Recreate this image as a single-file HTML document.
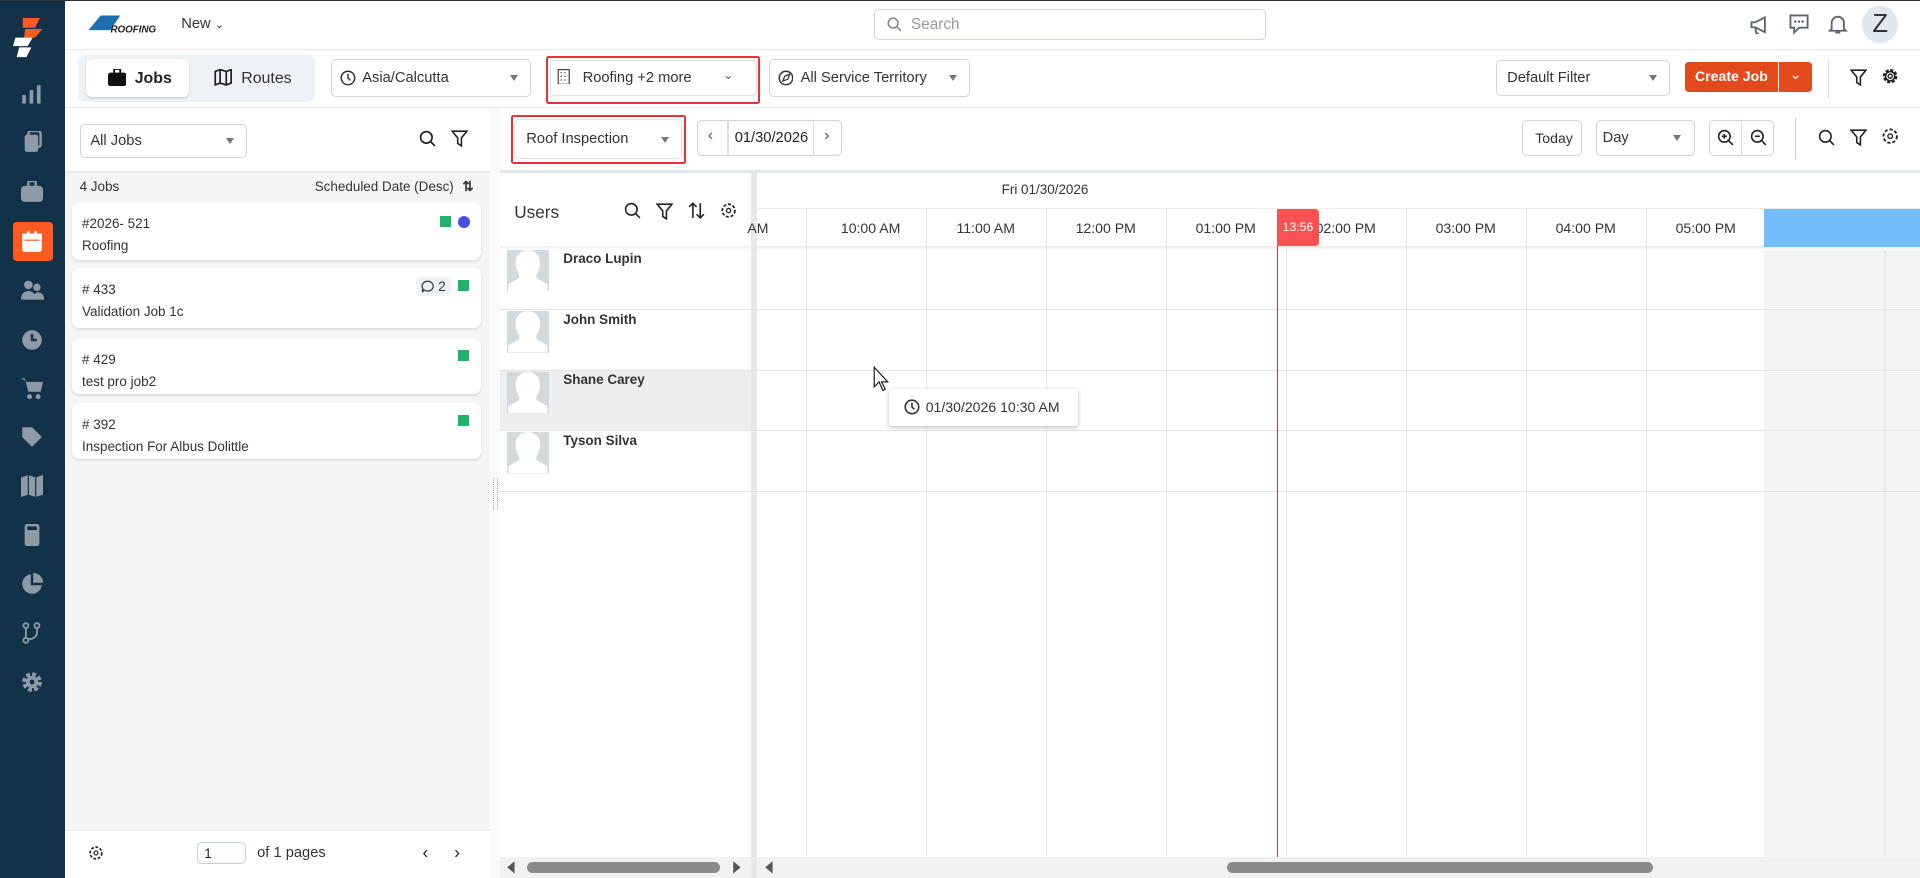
<!DOCTYPE html>
<html><head><meta charset="utf-8"><style>
html,body{margin:0;padding:0;width:1920px;height:878px;overflow:hidden;background:#fff}
#w{zoom:1.22449;width:1568px;height:717px;position:relative;font-family:"Liberation Sans",sans-serif;color:#222;font-size:12px;overflow:hidden}
.a{position:absolute}
.sel{position:absolute;border:1px solid #cfd4da;border-radius:4px;background:#fff;box-sizing:border-box;display:flex;align-items:center;padding-left:8px;font-size:12px;color:#333}
.car{position:absolute;right:10px;top:50%;margin-top:-2px;border-left:4px solid transparent;border-right:4px solid transparent;border-top:5px solid #777}
.card{position:absolute;left:59px;width:334px;background:#fff;border-radius:6px;box-shadow:0 1px 2px rgba(0,0,0,.12);box-sizing:border-box;padding:9px 8px;font-size:11px;color:#333;line-height:18px}
.sq{position:absolute;width:9px;height:9px;background:#1fb36b;top:10px}
.vl{position:absolute;top:171px;bottom:18px;width:1px;background:#e8e8e8}
.hl{position:absolute;height:1px;background:#e3e3e3}
.th{position:absolute;top:180px;font-size:11.5px;color:#333;width:98px;text-align:center}
.av{position:absolute;left:414px;width:34px;height:34px;background:#d5d8dc;overflow:hidden}
.un{position:absolute;left:460px;font-size:11px;font-weight:bold;color:#333}
.sb svg{position:absolute;left:17px}
</style></head><body><div id="w">
<div class="a" style="left:0;top:0;width:1568px;height:1px;background:#333"></div>
<!-- sidebar -->
<div class="a sb" style="left:0;top:1px;width:53px;height:716px;background:#12324a">
<svg style="left:11px;top:14px" width="30" height="32" viewBox="0 0 30 32"><path d="M8 0h14l-4 8H8z" fill="#ff5a1f"/><path d="M10 9h14l-6 7h-9z" fill="#ff5a1f"/><path d="M2 16h14l-4 7H0z" fill="#fff"/><path d="M5 24h10l-4 8H3z" fill="#fff"/></svg>
<svg style="top:68px" width="18" height="16"><rect x="1" y="9" width="3" height="7" fill="#8e9aa5"/><rect x="7" y="5" width="3" height="11" fill="#8e9aa5"/><rect x="13" y="1" width="3" height="15" fill="#8e9aa5"/></svg>
<svg style="top:106px" width="18" height="18"><rect x="3" y="3" width="11" height="14" rx="2" fill="#8e9aa5"/><rect x="6" y="0" width="10" height="13" rx="2" fill="none" stroke="#8e9aa5" stroke-width="2"/></svg>
<svg style="top:147px" width="18" height="17"><rect x="0" y="4" width="18" height="13" rx="3" fill="#8e9aa5"/><rect x="6" y="0" width="6" height="5" rx="1" fill="none" stroke="#8e9aa5" stroke-width="2"/></svg>
<div class="a" style="left:11px;top:180px;width:32px;height:32px;background:#ff5a1f;border-radius:3px"></div>
<svg style="top:188px" width="18" height="17"><rect x="1" y="2" width="16" height="15" rx="2" fill="#fff"/><rect x="1" y="2" width="16" height="4" fill="#fff"/><rect x="3" y="7" width="12" height="1" fill="#ff5a1f"/><rect x="5" y="0" width="2" height="4" fill="#fff"/><rect x="11" y="0" width="2" height="4" fill="#fff"/></svg>
<svg style="top:228px" width="19" height="17"><circle cx="6" cy="4" r="3.5" fill="#8e9aa5"/><circle cx="13" cy="6" r="3" fill="#8e9aa5"/><path d="M0 16c0-5 3-7 6-7s6 2 6 7z M10 16c0-4 2-6 4-6s5 2 5 6z" fill="#8e9aa5"/></svg>
<svg style="top:268px" width="18" height="18"><circle cx="9" cy="9" r="8" fill="#8e9aa5"/><path d="M9 4v5h4" stroke="#12324a" stroke-width="2" fill="none"/></svg>
<svg style="top:307px" width="18" height="18"><path d="M0 1h3l3 11h10l2-8H5" fill="#8e9aa5"/><circle cx="7" cy="16" r="2" fill="#8e9aa5"/><circle cx="14" cy="16" r="2" fill="#8e9aa5"/></svg>
<svg style="top:347px" width="18" height="18"><path d="M1 1h8l8 8-8 8-8-8z" fill="#8e9aa5"/></svg>
<svg style="top:387px" width="18" height="18"><path d="M0 2l6-2 6 2 6-2v16l-6 2-6-2-6 2z" fill="#8e9aa5"/><path d="M6 0v16M12 2v16" stroke="#12324a"/></svg>
<svg style="top:427px" width="18" height="18"><rect x="3" y="0" width="12" height="18" rx="2" fill="#8e9aa5"/><rect x="5" y="2" width="8" height="3" fill="#12324a"/></svg>
<svg style="top:467px" width="18" height="18"><path d="M8 1A8 8 0 1 0 17 10H8z" fill="#8e9aa5"/><path d="M10 0a8 8 0 0 1 8 8h-8z" fill="#8e9aa5"/></svg>
<svg style="top:507px" width="18" height="18"><circle cx="4" cy="3" r="2" fill="none" stroke="#8e9aa5" stroke-width="1.5"/><circle cx="13" cy="3" r="2" fill="none" stroke="#8e9aa5" stroke-width="1.5"/><circle cx="4" cy="15" r="2" fill="none" stroke="#8e9aa5" stroke-width="1.5"/><path d="M4 5v8M13 5v4c0 3-3 5-7 5" stroke="#8e9aa5" stroke-width="1.5" fill="none"/></svg>
<svg style="top:547px" width="18" height="18"><circle cx="9" cy="9" r="6" fill="none" stroke="#8e9aa5" stroke-width="4" stroke-dasharray="3 1.7"/><circle cx="9" cy="9" r="5" fill="#8e9aa5"/><circle cx="9" cy="9" r="2" fill="#12324a"/></svg>
</div>
<!-- top bar -->
<svg class="a" style="left:70px;top:11px" width="60" height="18"><path d="M2 14L12 2h16l-8 12z" fill="#1f6fb0"/><text x="20" y="16" font-size="8" font-style="italic" font-weight="bold" fill="#222" font-family="Liberation Sans">ROOFING</text></svg>
<div class="a" style="left:148px;top:13px;font-size:12px;color:#333">New <span style="font-size:9px">⌄</span></div>
<div class="a" style="left:714px;top:7px;width:320px;height:26px;border:1px solid #cfd4da;border-radius:4px;box-sizing:border-box"></div>
<svg class="a" style="left:724px;top:14px" width="12" height="12"><circle cx="5" cy="5" r="4" fill="none" stroke="#888" stroke-width="1.3"/><path d="M8 8l3.5 3.5" stroke="#888" stroke-width="1.3"/></svg>
<div class="a" style="left:744px;top:13px;font-size:12.5px;color:#999">Search</div>
<svg class="a" style="left:1428px;top:12px" width="16" height="16"><path d="M2 6h3l8-4v12l-8-4H2z M5 10l1 5h2" fill="none" stroke="#5a6570" stroke-width="1.5"/></svg>
<svg class="a" style="left:1460px;top:11px" width="18" height="18"><path d="M2 2h14v10H9l-4 4v-4H2z" fill="none" stroke="#5a6570" stroke-width="1.5"/><circle cx="6" cy="7" r="1" fill="#5a6570"/><circle cx="9" cy="7" r="1" fill="#5a6570"/><circle cx="12" cy="7" r="1" fill="#5a6570"/></svg>
<svg class="a" style="left:1493px;top:11px" width="16" height="18"><path d="M3 13V8a5 5 0 0 1 10 0v5l1.5 1.5h-13z M6 16h4" fill="none" stroke="#5a6570" stroke-width="1.5"/></svg>
<div class="a" style="left:1521px;top:5px;width:29px;height:30px;border-radius:50%;background:#e2e8ef;text-align:center;line-height:30px;font-size:21px;color:#333">Z</div>
<div class="hl" style="left:53px;top:40px;width:1515px;background:#e6e9ed"></div>
<!-- row 2 -->
<div class="a" style="left:64px;top:45px;width:193px;height:38px;background:#eef1f5;border-radius:6px"></div>
<div class="a" style="left:70px;top:48px;width:84px;height:31px;background:#fff;border-radius:5px;box-shadow:0 1px 2px rgba(0,0,0,.15)"></div>
<svg class="a" style="left:88px;top:56px" width="15" height="14"><rect x="0" y="3" width="15" height="11" rx="2" fill="#111"/><rect x="5" y="0" width="5" height="4" fill="none" stroke="#111" stroke-width="1.5"/></svg>
<div class="a" style="left:110px;top:57px;font-size:13px;font-weight:bold;color:#222">Jobs</div>
<svg class="a" style="left:175px;top:56px" width="15" height="14"><path d="M1 2l4-1.5 5 1.5 4-1.5v11l-4 1.5-5-1.5-4 1.5z M5 0.5v11M10 2v11" fill="none" stroke="#222" stroke-width="1.4"/></svg>
<div class="a" style="left:197px;top:57px;font-size:13px;color:#333">Routes</div>
<div class="sel" style="left:270px;top:48px;width:164px;height:31px;padding-left:25px">Asia/Calcutta<span class="car"></span></div>
<svg class="a" style="left:278px;top:57px" width="13" height="13"><circle cx="6.5" cy="6.5" r="5.5" fill="none" stroke="#333" stroke-width="1.2"/><path d="M6.5 3v3.5l2 2" stroke="#333" stroke-width="1.2" fill="none"/></svg>
<div class="a" style="left:446px;top:46px;width:175px;height:39px;border:2px solid #e8323a;box-sizing:border-box;border-radius:2px"></div>
<div class="sel" style="left:449px;top:49px;width:169px;height:29px;border-color:#e0e0e0;padding-left:26px">Roofing +2 more<span class="a" style="right:18px;top:6px;font-size:10px;color:#555">⌄</span></div>
<svg class="a" style="left:455px;top:56px" width="11" height="13"><rect x="1" y="0.5" width="9" height="12" fill="none" stroke="#444"/><path d="M3 3h1M6 3h1M3 6h1M6 6h1M3 9h1M6 9h1" stroke="#444"/></svg>
<div class="sel" style="left:628px;top:48px;width:164px;height:31px;padding-left:25px">All Service Territory<span class="car"></span></div>
<svg class="a" style="left:635px;top:57px" width="13" height="13"><circle cx="6.5" cy="6.5" r="5.5" fill="none" stroke="#333" stroke-width="1.2"/><path d="M4 9l1.5-4 4-1.5-1.5 4z" fill="none" stroke="#333"/></svg>
<div class="sel" style="left:1222px;top:49px;width:142px;height:29px">Default Filter<span class="car"></span></div>
<div class="a" style="left:1376px;top:51px;width:76px;height:24px;background:#e34a1b;border-radius:3px 0 0 3px;color:#fff;font-weight:bold;font-size:11.5px;text-align:center;line-height:24px">Create Job</div>
<div class="a" style="left:1453px;top:51px;width:27px;height:24px;background:#e34a1b;border-radius:0 3px 3px 0;color:#fff;text-align:center;line-height:22px;font-size:12px">⌄</div>
<div class="a" style="left:1493px;top:48px;width:1px;height:32px;background:#ddd"></div>
<svg class="a" style="left:1511px;top:56px" width="14" height="14"><path d="M1 1h12l-4.5 5.5V13l-3-2V6.5z" fill="none" stroke="#222" stroke-width="1.3"/></svg>
<svg class="a" style="left:1536px;top:55px" width="15" height="15" viewBox="0 0 16 16"><circle cx="8" cy="8" r="5" fill="none" stroke="#222" stroke-width="2.6" stroke-dasharray="2.6 1.3"/><circle cx="8" cy="8" r="4" fill="none" stroke="#222" stroke-width="1.3"/><circle cx="8" cy="8" r="1.8" fill="none" stroke="#222" stroke-width="1.2"/></svg>
<div class="hl" style="left:53px;top:87px;width:1515px;background:#e6e9ed"></div>
<!-- left panel -->
<div class="a" style="left:53px;top:88px;width:347px;height:629px;background:#f5f5f5"></div>
<div class="a" style="left:53px;top:88px;width:347px;height:52px;background:#fff"></div>
<div class="sel" style="left:65px;top:101px;width:137px;height:28px">All Jobs<span class="car"></span></div>
<svg class="a" style="left:342px;top:106px" width="14" height="14"><circle cx="6" cy="6" r="4.7" fill="none" stroke="#222" stroke-width="1.4"/><path d="M9.5 9.5l3.5 3.5" stroke="#222" stroke-width="1.4"/></svg>
<svg class="a" style="left:368px;top:106px" width="14" height="14"><path d="M1 1h12l-4.5 5.5V13l-3-2V6.5z" fill="none" stroke="#222" stroke-width="1.3"/></svg>
<div class="hl" style="left:53px;top:140px;width:347px;background:#e6e9ed"></div>
<div class="a" style="left:65px;top:146px;font-size:11px;color:#333">4 Jobs</div>
<div class="a" style="left:257px;top:146px;font-size:11px;color:#333">Scheduled Date (Desc) <b style="margin-left:4px">⇅</b></div>
<div class="card" style="top:165px;height:47px">#2026- 521<br>Roofing<span class="sq" style="left:300px;top:11px"></span><span class="a" style="left:315px;top:11px;width:10px;height:10px;border-radius:50%;background:#4b4fe0"></span></div>
<div class="card" style="top:219px;height:49px"># 433<br>Validation Job 1c<span class="a" style="left:281px;top:7px;width:28px;height:16px;background:#eef1f5;border-radius:4px;font-size:11px;line-height:16px;text-align:right;padding-right:4px;box-sizing:border-box">2</span><svg class="a" style="left:285px;top:10px" width="11" height="11"><path d="M5.5 1a4.5 4 0 1 1-3 7L1 10l.5-3A4.5 4 0 0 1 5.5 1z" fill="none" stroke="#333"/></svg><span class="sq" style="left:315px;top:10px"></span></div>
<div class="card" style="top:276px;height:46px"># 429<br>test pro job2<span class="sq" style="left:315px"></span></div>
<div class="card" style="top:329px;height:46px"># 392<br>Inspection For Albus Dolittle<span class="sq" style="left:315px"></span></div>
<div class="a" style="left:53px;top:678px;width:347px;height:39px;background:#fff;border-top:1px solid #e6e9ed"></div>
<svg class="a" style="left:72px;top:690px" width="13" height="13" viewBox="0 0 16 16"><circle cx="8" cy="8" r="5.5" fill="none" stroke="#222" stroke-width="2.4" stroke-dasharray="2.6 1.6"/><circle cx="8" cy="8" r="4.3" fill="none" stroke="#fff" stroke-width="1.5"/><circle cx="8" cy="8" r="2" fill="none" stroke="#222" stroke-width="1.2"/></svg>
<div class="a" style="left:161px;top:688px;width:40px;height:18px;border:1px solid #c8d0da;border-radius:4px;box-sizing:border-box;font-size:11px;padding:2px 5px;background:#fcfdff">1</div>
<div class="a" style="left:210px;top:690px;font-size:12px;color:#333">of 1 pages</div>
<div class="a" style="left:345px;top:688px;font-size:14px;color:#222">‹</div>
<div class="a" style="left:371px;top:688px;font-size:14px;color:#222">›</div>
<!-- splitter -->
<div class="a" style="left:400px;top:88px;width:8px;height:629px;background:#fafafa"></div>
<div class="a" style="left:403px;top:390px;width:2px;height:26px;border-left:1px dotted #aaa;border-right:1px dotted #aaa"></div>
<!-- right toolbar -->
<div class="a" style="left:417px;top:94px;width:143px;height:40px;border:2px solid #e8323a;box-sizing:border-box;border-radius:2px"></div>
<div class="sel" style="left:420px;top:97px;width:137px;height:33px;border-color:#e0e0e0;padding-left:9px">Roof Inspection<span class="car"></span></div>
<div class="a" style="left:569px;top:98px;width:119px;height:29px;border:1px solid #cfd4da;border-radius:4px;box-sizing:border-box"></div>
<div class="a" style="left:594px;top:98px;width:1px;height:29px;background:#dde"></div>
<div class="a" style="left:664px;top:98px;width:1px;height:29px;background:#dde"></div>
<div class="a" style="left:578px;top:104px;font-size:13px;color:#555">‹</div>
<div class="a" style="left:600px;top:106px;font-size:12px;color:#222">01/30/2026</div>
<div class="a" style="left:673px;top:104px;font-size:13px;color:#555">›</div>
<div class="sel" style="left:1243px;top:98px;width:49px;height:29px;padding-left:10px;font-size:11.5px">Today</div>
<div class="sel" style="left:1303px;top:98px;width:81px;height:29px;padding-left:5px">Day<span class="car"></span></div>
<div class="a" style="left:1396px;top:98px;width:53px;height:29px;border:1px solid #cfd4da;border-radius:4px;box-sizing:border-box"></div>
<div class="a" style="left:1422px;top:98px;width:1px;height:29px;background:#dde"></div>
<svg class="a" style="left:1402px;top:105px" width="14" height="14"><circle cx="6" cy="6" r="4.7" fill="none" stroke="#222" stroke-width="1.3"/><path d="M9.5 9.5l3.5 3.5M4 6h4M6 4v4" stroke="#222" stroke-width="1.3"/></svg>
<svg class="a" style="left:1429px;top:105px" width="14" height="14"><circle cx="6" cy="6" r="4.7" fill="none" stroke="#222" stroke-width="1.3"/><path d="M9.5 9.5l3.5 3.5M4 6h4" stroke="#222" stroke-width="1.3"/></svg>
<div class="a" style="left:1466px;top:96px;width:1px;height:34px;background:#ccc"></div>
<svg class="a" style="left:1485px;top:105px" width="14" height="14"><circle cx="6" cy="6" r="4.7" fill="none" stroke="#222" stroke-width="1.3"/><path d="M9.5 9.5l3.5 3.5" stroke="#222" stroke-width="1.3"/></svg>
<svg class="a" style="left:1511px;top:105px" width="14" height="14"><path d="M1 1h12l-4.5 5.5V13l-3-2V6.5z" fill="none" stroke="#222" stroke-width="1.3"/></svg>
<svg class="a" style="left:1536px;top:104px" width="15" height="15" viewBox="0 0 16 16"><circle cx="8" cy="8" r="5.5" fill="none" stroke="#222" stroke-width="2.4" stroke-dasharray="2.6 1.6"/><circle cx="8" cy="8" r="4.3" fill="none" stroke="#fff" stroke-width="1.5"/><circle cx="8" cy="8" r="2" fill="none" stroke="#222" stroke-width="1.2"/></svg>
<div class="hl" style="left:408px;top:139px;width:1160px;background:#e3e6ea;height:2px"></div>
<!-- scheduler -->
<div class="a" style="left:613px;top:141px;width:5px;height:576px;background:#e8e8e8"></div>
<div class="a" style="left:420px;top:165px;font-size:14px;color:#333">Users</div>
<svg class="a" style="left:510px;top:165px" width="14" height="14"><circle cx="6" cy="6" r="4.7" fill="none" stroke="#222" stroke-width="1.3"/><path d="M9.5 9.5l3.5 3.5" stroke="#222" stroke-width="1.3"/></svg>
<svg class="a" style="left:536px;top:166px" width="14" height="14"><path d="M1 1h12l-4.5 5.5V13l-3-2V6.5z" fill="none" stroke="#222" stroke-width="1.3"/></svg>
<svg class="a" style="left:562px;top:165px" width="14" height="14"><path d="M4 13V1M1 4l3-3 3 3M10 1v12M7 10l3 3 3-3" fill="none" stroke="#222" stroke-width="1.3"/></svg>
<svg class="a" style="left:588px;top:165px" width="14" height="14" viewBox="0 0 16 16"><circle cx="8" cy="8" r="5.5" fill="none" stroke="#222" stroke-width="2.4" stroke-dasharray="2.6 1.6"/><circle cx="8" cy="8" r="4.3" fill="none" stroke="#fff" stroke-width="1.5"/><circle cx="8" cy="8" r="2" fill="none" stroke="#222" stroke-width="1.2"/></svg>
<div class="a" style="left:408px;top:201px;width:205px;height:3px;background:linear-gradient(#eee,#fff)"></div>
<div class="a" style="left:818px;top:149px;font-size:11px;color:#333">Fri 01/30/2026</div>
<div class="hl" style="left:618px;top:170px;width:950px;background:#ececec"></div>
<div class="a" style="left:618px;top:201px;width:950px;height:3px;background:linear-gradient(#e8e8e8,#fff)"></div>
<div class="a" style="left:1441px;top:171px;width:127px;height:31px;background:#74bdfb"></div>
<div class="a" style="left:1441px;top:204px;width:127px;height:496px;background:#f4f4f4"></div>
<div class="a" style="left:408px;top:302px;width:205px;height:49px;background:#eeeeee"></div>
<div class="vl" style="left:658px"></div><div class="vl" style="left:756px"></div><div class="vl" style="left:854px"></div><div class="vl" style="left:952px"></div><div class="vl" style="left:1050px"></div><div class="vl" style="left:1148px"></div><div class="vl" style="left:1246px"></div><div class="vl" style="left:1344px"></div><div class="vl" style="left:1539px;top:204px"></div>
<div class="th" style="left:570px">AM</div><div class="th" style="left:662px">10:00 AM</div><div class="th" style="left:756px">11:00 AM</div><div class="th" style="left:854px">12:00 PM</div><div class="th" style="left:952px">01:00 PM</div><div class="th" style="left:1050px">02:00 PM</div><div class="th" style="left:1148px">03:00 PM</div><div class="th" style="left:1246px">04:00 PM</div><div class="th" style="left:1344px">05:00 PM</div>
<div class="hl" style="left:408px;top:252px;width:1160px"></div><div class="hl" style="left:408px;top:302px;width:1160px"></div><div class="hl" style="left:408px;top:351px;width:1160px"></div><div class="hl" style="left:408px;top:401px;width:1160px"></div>
<svg width="0" height="0" style="position:absolute"><defs><symbol id="p" viewBox="0 0 34 34"><path d="M10 20c-2-3-3-6-3-10a10 10 0 0 1 20 0c0 4-1 7-3 10v3l9 5v6H1v-6l9-5z" fill="#fff"/></symbol></defs></svg>
<div class="av" style="top:204px"><svg width="34" height="34"><use href="#p"/></svg></div>
<div class="av" style="top:254px"><svg width="34" height="34"><use href="#p"/></svg></div>
<div class="av" style="top:304px"><svg width="34" height="34"><use href="#p"/></svg></div>
<div class="av" style="top:353px"><svg width="34" height="34"><use href="#p"/></svg></div>
<div class="un" style="top:205px">Draco Lupin</div><div class="un" style="top:255px">John Smith</div><div class="un" style="top:304px">Shane Carey</div><div class="un" style="top:354px">Tyson Silva</div>
<div class="a" style="left:1043px;top:171px;width:1px;height:529px;background:#e8323a"></div>
<div class="a" style="left:1043px;top:171px;width:34px;height:30px;background:#fa5252;border-radius:0 3px 3px 0;color:#fff;font-size:10px;line-height:30px;text-align:center">13:56</div>
<svg class="a" style="left:713px;top:299px" width="14" height="22"><path d="M1 1v16l4-4 3 7 2-1-3-6h5z" fill="#fff" stroke="#222"/></svg>
<div class="a" style="left:726px;top:318px;width:154px;height:30px;background:#fff;box-shadow:0 1px 4px rgba(0,0,0,.25);border-radius:2px"></div>
<svg class="a" style="left:738px;top:326px" width="13" height="13"><circle cx="6.5" cy="6.5" r="5.5" fill="none" stroke="#333" stroke-width="1.3"/><path d="M6.5 3v3.5l2 2" stroke="#333" stroke-width="1.3" fill="none"/></svg>
<div class="a" style="left:756px;top:326px;font-size:11.5px;color:#333">01/30/2026 10:30 AM</div>
<!-- scrollbars -->
<div class="a" style="left:408px;top:700px;width:205px;height:17px;background:#f1f1f1"></div>
<div class="a" style="left:430px;top:704px;width:158px;height:9px;background:#8a8a8a;border-radius:5px"></div>
<svg class="a" style="left:413px;top:702px" width="8" height="12"><path d="M7 1L1 6l6 5z" fill="#555"/></svg>
<svg class="a" style="left:598px;top:702px" width="8" height="12"><path d="M1 1l6 5-6 5z" fill="#555"/></svg>
<div class="a" style="left:618px;top:700px;width:950px;height:17px;background:#f1f1f1"></div>
<svg class="a" style="left:624px;top:702px" width="8" height="12"><path d="M7 1L1 6l6 5z" fill="#555"/></svg>
<div class="a" style="left:1002px;top:704px;width:348px;height:9px;background:#8a8a8a;border-radius:5px"></div>
</div></body></html>
